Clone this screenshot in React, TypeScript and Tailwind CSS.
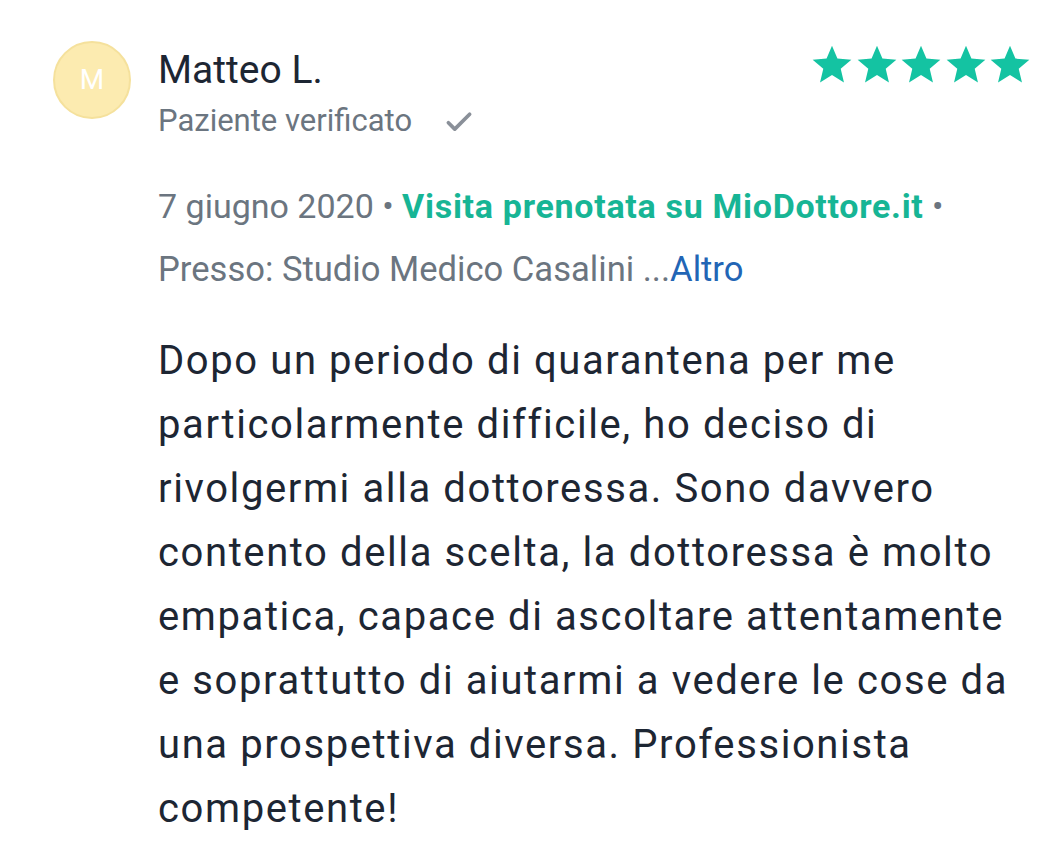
import React from 'react';

const Star = () => (
  <svg viewBox="0 0 24 24" className="h-[44px] w-[44px]" fill="#14c3a2">
    <path d="M12 2l2.95 7.05 7.6.6-5.8 4.98 1.78 7.42L12 18.05l-6.53 4 1.78-7.42-5.8-4.98 7.6-.6z" />
  </svg>
);

const App = () => {
  return (
    <div className="min-h-screen w-[1054px] bg-white font-['Roboto',sans-serif]">
      <div className="flex pl-[53px] pr-[24px] pt-[41px]">
        <div className="flex h-[78px] w-[78px] shrink-0 items-center justify-center rounded-full border-2 border-[#f5e19c] bg-[#fcebb0] text-[28px] text-white">
          M
        </div>
        <div className="ml-[27px] flex-1">
          <div className="flex items-start justify-between">
            <div>
              <p className="text-[39px] leading-[58px] text-[#1d2633]">Matteo L.</p>
              <div className="flex items-center">
                <p className="text-[31px] leading-[44px] text-[#6b7580]">Paziente verificato</p>
                <svg viewBox="0 0 24 24" className="ml-[30px] mt-[2px] h-[34px] w-[34px]" fill="none" stroke="#8a9099" strokeWidth="2.6" strokeLinecap="round" strokeLinejoin="round">
                  <path d="M4.5 12.5l4.5 4.5L19.5 6.5" />
                </svg>
              </div>
            </div>
            <div className="mt-[1px] -mr-[2px] flex gap-[0.5px]">
              <Star />
              <Star />
              <Star />
              <Star />
              <Star />
            </div>
          </div>
          <p className="mt-[40px] text-[34px] leading-[46px] text-[#6b7580]">
            7 giugno 2020 • <span className="font-bold tracking-[0.7px] text-[#17b595]">Visita prenotata su MioDottore.it</span> •
          </p>
          <p className="mt-[17px] text-[34.6px] leading-[46px] text-[#6b7580]">
            Presso: Studio Medico Casalini ...<span className="text-[#2265b5]">Altro</span>
          </p>
          <p className="mt-[37px] max-w-[860px] text-[40px] leading-[64px] tracking-[1.6px] text-[#1d2633]">
            Dopo un periodo di quarantena per me particolarmente difficile, ho deciso di rivolgermi alla dottoressa. Sono davvero contento della scelta, la dottoressa è molto empatica, capace di ascoltare attentamente e soprattutto di aiutarmi a vedere le cose da una prospettiva diversa. Professionista competente!
          </p>
        </div>
      </div>
    </div>
  );
};

export default App;
